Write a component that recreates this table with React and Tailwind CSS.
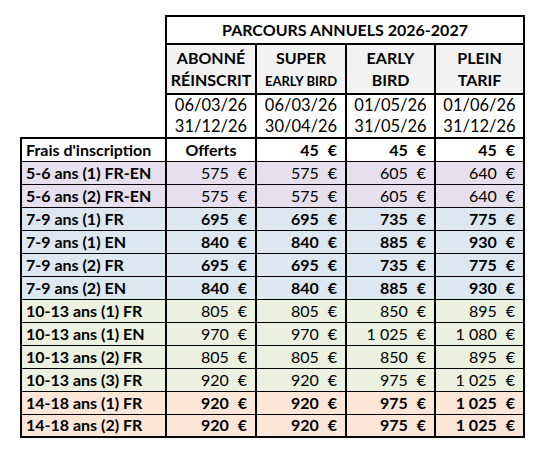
import React from "react";

const LAV = "bg-[#e6e0ec]";
const BLUE = "bg-[#dde7f1]";
const GREEN = "bg-[#ebf1de]";
const PEACH = "bg-[#fce6d8]";

const rows = [
  { label: "Frais d'inscription", vals: ["Offerts", "45", "45", "45"], bg: "bg-white", bold: true },
  { label: "5-6 ans (1) FR-EN", vals: ["575", "575", "605", "640"], bg: LAV, bold: false },
  { label: "5-6 ans (2) FR-EN", vals: ["575", "575", "605", "640"], bg: LAV, bold: false },
  { label: "7-9 ans (1) FR", vals: ["695", "695", "735", "775"], bg: BLUE, bold: true },
  { label: "7-9 ans (1) EN", vals: ["840", "840", "885", "930"], bg: BLUE, bold: true },
  { label: "7-9 ans (2) FR", vals: ["695", "695", "735", "775"], bg: BLUE, bold: true },
  { label: "7-9 ans (2) EN", vals: ["840", "840", "885", "930"], bg: BLUE, bold: true },
  { label: "10-13 ans (1) FR", vals: ["805", "805", "850", "895"], bg: GREEN, bold: false },
  { label: "10-13 ans (1) EN", vals: ["970", "970", "1 025", "1 080"], bg: GREEN, bold: false },
  { label: "10-13 ans (2) FR", vals: ["805", "805", "850", "895"], bg: GREEN, bold: false },
  { label: "10-13 ans (3) FR", vals: ["920", "920", "975", "1 025"], bg: GREEN, bold: false },
  { label: "14-18 ans (1) FR", vals: ["920", "920", "975", "1 025"], bg: PEACH, bold: true },
  { label: "14-18 ans (2) FR", vals: ["920", "920", "975", "1 025"], bg: PEACH, bold: true },
];

function ValueCell({ v, bold, bg }) {
  if (v === "Offerts") {
    return (
      <td className={`${bg} border-x-2 border-y border-black text-center font-bold h-[23px] p-0 leading-none`}>
        {v}
      </td>
    );
  }
  return (
    <td className={`${bg} border-x-2 border-y border-black h-[23px] p-0 leading-none ${bold ? "font-bold" : "font-normal"}`}>
      <div className="flex justify-end items-center pr-[8px]">
        <span>{v}</span>
        <span className="ml-[9px]">€</span>
      </div>
    </td>
  );
}

export default function App() {
  return (
    <div className="w-[545px] h-[458px] bg-white text-black pt-[15px] pl-[20px]" style={{ fontFamily: "Lato, 'Liberation Sans', sans-serif" }}>
      <table className="border-collapse text-[16px] table-fixed">
        <colgroup>
          <col className="w-[145px]" />
          <col className="w-[90px]" />
          <col className="w-[90px]" />
          <col className="w-[89px]" />
          <col className="w-[89px]" />
        </colgroup>
        <tbody>
          <tr>
            <td className="p-0"></td>
            <td colSpan={4} className="border-2 border-black text-center font-bold h-[28px] p-0 leading-none">
              PARCOURS ANNUELS 2026-2027
            </td>
          </tr>
          <tr>
            <td className="p-0"></td>
            <td className="border-2 border-black bg-[#f2f2f2] text-center font-bold h-[50px] p-0 leading-[22px]">
              ABONNÉ<br />RÉINSCRIT
            </td>
            <td className="border-2 border-black bg-[#f2f2f2] text-center font-bold h-[50px] p-0 leading-[22px]">
              SUPER<br /><span className="text-[13px]">EARLY BIRD</span>
            </td>
            <td className="border-2 border-black bg-[#f2f2f2] text-center font-bold h-[50px] p-0 leading-[22px]">
              EARLY<br />BIRD
            </td>
            <td className="border-2 border-black bg-[#f2f2f2] text-center font-bold h-[50px] p-0 leading-[22px]">
              PLEIN<br />TARIF
            </td>
          </tr>
          <tr>
            <td className="p-0"></td>
            {[["06/03/26", "31/12/26"], ["06/03/26", "30/04/26"], ["01/05/26", "31/05/26"], ["01/06/26", "31/12/26"]].map((d, i) => (
              <td key={i} className="border-2 border-black text-center h-[44px] p-0 leading-[21px] text-[16.5px]">
                {d[0]}<br />{d[1]}
              </td>
            ))}
          </tr>
          {rows.map((r, ri) => (
            <tr key={ri} className={ri === 0 ? "border-t-2 border-black" : ri === rows.length - 1 ? "border-b-2 border-black" : ""}>
              <td className={`${r.bg} border-x-2 border-y border-black font-bold h-[23px] pl-[4px] py-0 leading-none whitespace-nowrap`}>
                {r.label}
              </td>
              {r.vals.map((v, vi) => (
                <ValueCell key={vi} v={v} bold={r.bold} bg={r.bg} />
              ))}
            </tr>
          ))}
        </tbody>
      </table>
    </div>
  );
}
